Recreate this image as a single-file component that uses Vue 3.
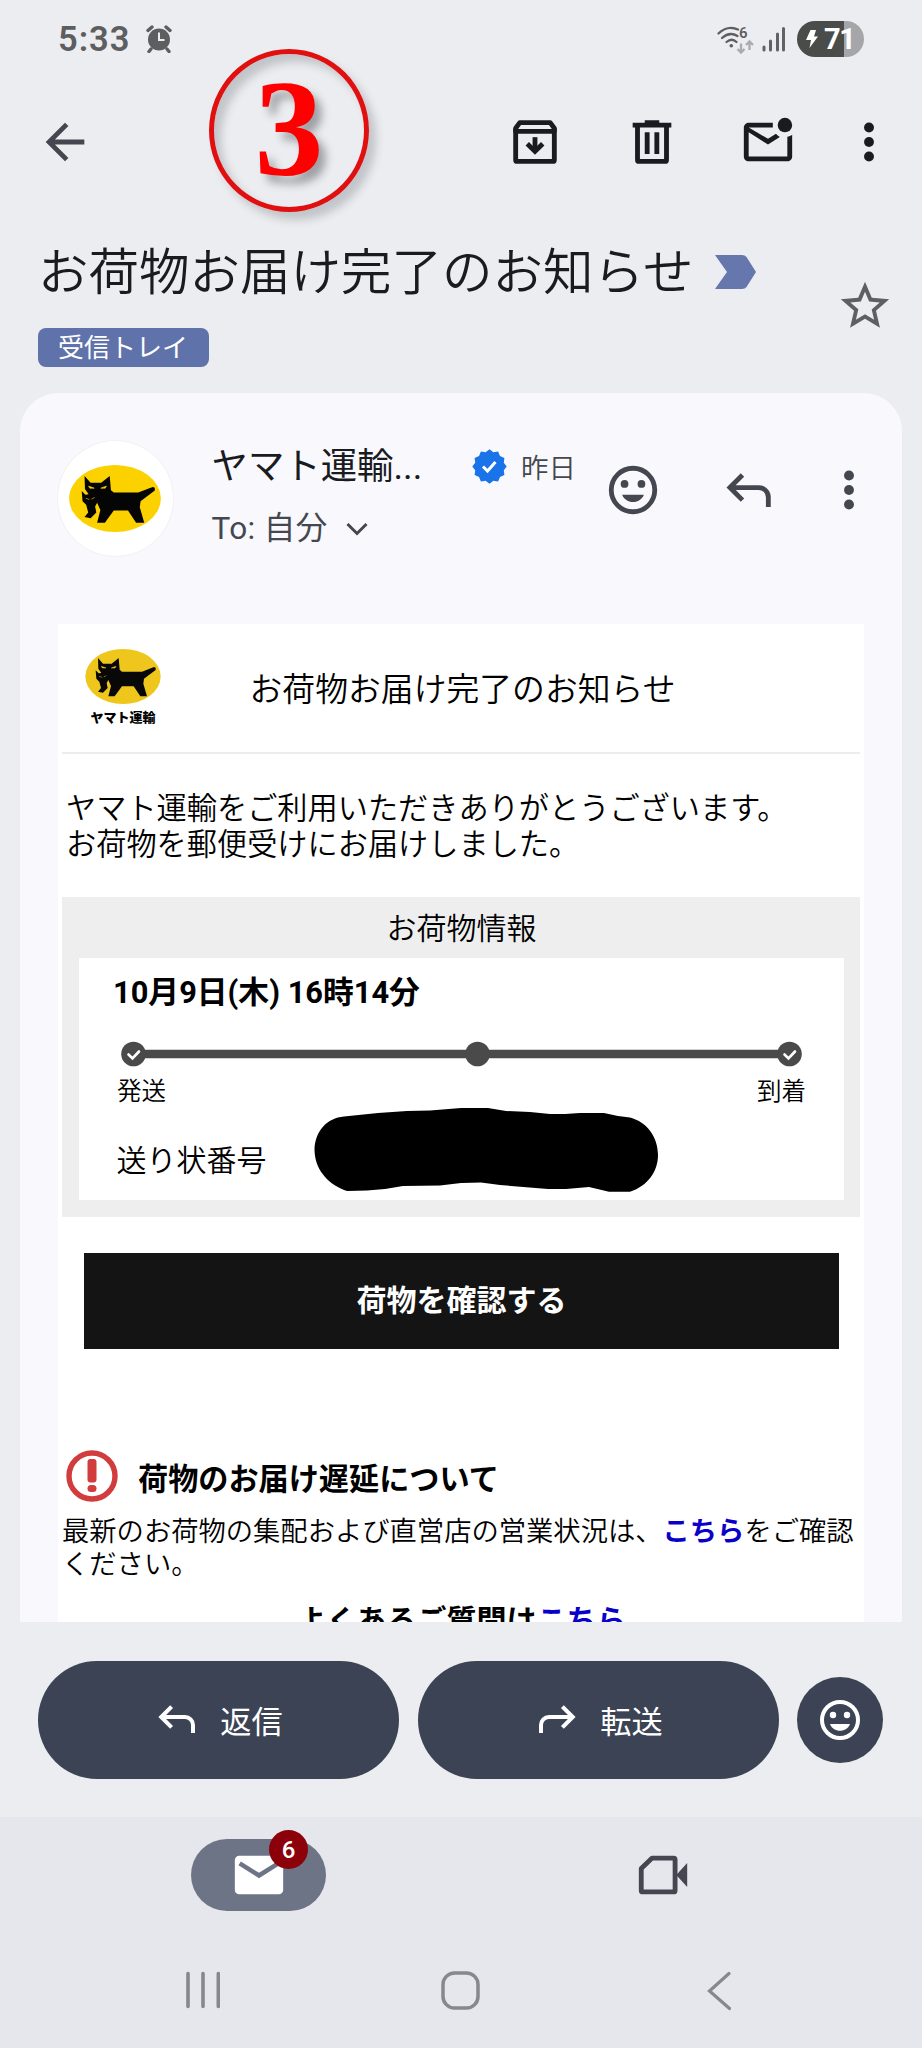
<script setup>
const catPath =
  'M294 174 L309 191 H335 L356 174 L359 209 L366 215 H426 L462 201 L467 203 V210 L432 236 L430 251 L441 289 H421 L401 259 H366 L344 289 H325 L333 258 L325 240 L320 249 L323 264 L309 278 L294 275 L303 264 L298 245 L289 236 L287 211 L296 220 L304 219 L295 206 Z'
const steps = [
  { x: 133.5, done: true },
  { x: 477.5, done: false },
  { x: 789.5, done: true },
]
const badgePoints = Array.from({ length: 24 }, (_, i) => {
  const r = i % 2 ? 14.8 : 17.2
  const a = (i * Math.PI) / 12
  return `${(17.5 + r * Math.cos(a)).toFixed(2)},${(17.5 + r * Math.sin(a)).toFixed(2)}`
}).join(' ')
</script>

<template>
  <div class="screen">
    <header class="status">
      <span class="clock">5:33</span>
      <svg class="alarm" viewBox="0 0 26 28" width="26" height="28">
        <circle cx="13" cy="14.5" r="11" fill="#5c5e60" />
        <path d="M2 5.5L6 2M24 5.5L20 2M5 24l-2 2.5M21 24l2 2.5" stroke="#5c5e60" stroke-width="3.4" stroke-linecap="round" />
        <path d="M13 7.500V15H18.500" fill="none" stroke="#ecedf1" stroke-width="2" />
      </svg>
      <div class="spacer"></div>
      <svg class="wifi" viewBox="0 0 38 30" width="38" height="30">
        <g fill="none" stroke="#5c5e60" stroke-width="2.300" stroke-linecap="round">
          <path d="M1.500 8.500C7 3 14.500 1.500 21 4.500" />
          <path d="M5 13c5-4.500 10.500-5 15.500-2" />
          <path d="M9.500 17c3.500-3 7-3 10 0" />
        </g>
        <circle cx="14.300" cy="20.800" r="1.800" fill="#5c5e60" />
        <text x="22" y="12.500" class="wifi-num">6</text>
        <path d="M24 18.500V27M20.500 24l3.500 3.500L27.500 24M32.500 25V16.500M29 20l3.500-3.500L36 20" fill="none" stroke="#a9abae" stroke-width="2.300" />
      </svg>
      <svg class="signal" viewBox="0 0 24 26" width="24" height="26">
        <path d="M2 21v3M8.500 15v9M15.500 8v16M21.500 2.500V24" stroke="#606264" stroke-width="3" stroke-linecap="round" />
      </svg>
      <div class="battery">
        <svg viewBox="0 0 12 18" width="12" height="18"><path d="M4.500 0H10L8 6.500H12L3.500 18L5 10H0Z" fill="#fff" /></svg>
        <span>71</span>
      </div>
    </header>

    <nav class="toolbar">
      <svg class="back" viewBox="0 0 24 24" width="58" height="58" fill="#44474f"><path d="M20 11H7.830l5.590-5.590L12 4l-8 8 8 8 1.410-1.410L7.830 13H20z" /></svg>
      <div class="spacer"></div>
      <svg class="t1" viewBox="0 0 24 24" width="58" height="58" fill="none" stroke="#191b20">
        <path d="M4 7V20a.6.6 0 0 0 .6.6H19.400a.6.6 0 0 0 .6-.6V7" stroke-width="2" transform="translate(0 -.6)" />
        <path d="M4 6.300L5.700 4H18.300L20 6.300V7.600H4Z" stroke-width="2" stroke-linejoin="round" />
        <path d="M12 10v5.500" stroke-width="2" />
        <path d="M8.800 12.700L12 15.900l3.200-3.200" stroke-width="2" />
      </svg>
      <svg class="t2" viewBox="0 0 24 24" width="58" height="58" fill="none" stroke="#191b20" stroke-width="2">
        <path d="M4 5H20M9 4h6" /><path d="M6 5V19.400a.6.6 0 0 0 .6.600H17.400a.6.6 0 0 0 .6-.600V5" /><path d="M10 8v9M14 8v9" />
      </svg>
      <svg class="t3" viewBox="0 0 24 24" width="58" height="58">
        <path d="M14 4H4c-1.100 0-2 .9-2 2v12c0 1.100.9 2 2 2h16c1.100 0 2-.9 2-2V9c-.6.400-1.300.700-2 .800V18H4V8l8 5 4.900-3.100c-.6-.400-1.200-.800-1.600-1.300L12 10.700 4 6H14z" fill="#191b20" />
        <circle cx="19" cy="5" r="3" fill="#191b20" />
      </svg>
      <svg class="t4" viewBox="0 0 24 24" width="58" height="58" fill="#191b20"><circle cx="12" cy="6" r="2.050" /><circle cx="12" cy="12" r="2.050" /><circle cx="12" cy="18" r="2.050" /></svg>
    </nav>

    <section class="subject">
      <div class="subject-main">
        <div class="subject-row">
          <h1>お荷物お届け完了のお知らせ</h1>
          <svg class="important" viewBox="0 0 41 34" width="41" height="34"><path d="M0 0H27q3 0 4.500 2L41 17 31.500 32q-1.500 2-4.500 2H0L12 17Z" fill="#6577ad" /></svg>
        </div>
        <span class="chip">受信トレイ</span>
      </div>
      <svg class="star" viewBox="0 0 24 24" width="58" height="58" fill="#5d5f63"><path d="M22 9.240l-7.190-.620L12 2 9.190 8.630 2 9.240l5.460 4.730L5.820 21 12 17.270 18.180 21l-1.630-7.030L22 9.240zM12 15.400l-3.760 2.270 1-4.280-3.320-2.880 4.380-.380L12 6.100l1.710 4.040 4.380.380-3.320 2.880 1 4.280L12 15.400z" /></svg>
    </section>

    <article class="card">
      <div class="sender">
        <div class="avatar">
          <svg viewBox="256 147 226 165" width="92" height="67">
            <ellipse cx="369" cy="229.500" rx="113" ry="82.500" fill="#fbd100" />
            <path :d="catPath" fill="#050505" />
            <path d="M304 199l14 5h-11zM348 199l-14 5h11zM297 229l9 3M319 227l-8 4" fill="#fbd100" stroke="#fbd100" stroke-width="1.500" />
          </svg>
        </div>
        <div class="who">
          <div class="name">ヤマト運輸...</div>
          <div class="to"><span>To: 自分</span>
            <svg viewBox="0 0 22 14" width="22" height="14"><path d="M1.500 2L11 11.500L20.500 2" fill="none" stroke="#44474f" stroke-width="3" /></svg>
          </div>
        </div>
        <svg class="verified" viewBox="0 0 35 35" width="35" height="35">
          <polygon :points="badgePoints" fill="#1a73e8" />
          <path d="M11 17.500l4.500 4.500 8-9" fill="none" stroke="#fff" stroke-width="3" />
        </svg>
        <span class="date">昨日</span>
        <svg class="a1" viewBox="0 0 24 24" width="58" height="58" fill="#44474f"><circle cx="12" cy="12" r="9" fill="none" stroke="#44474f" stroke-width="2" /><circle cx="8.500" cy="9.500" r="1.600" /><circle cx="15.500" cy="9.500" r="1.600" /><path d="M7.500 14h9c-.7 1.900-2.500 3-4.500 3s-3.800-1.100-4.500-3z" /></svg>
        <svg class="a2" viewBox="0 0 24 24" width="58" height="58" fill="none" stroke="#44474f" stroke-width="2"><path d="M4.600 11H16a4 4 0 0 1 4 4v4M9.300 5.800L4.100 11l5.200 5.200" /></svg>
        <svg class="a3" viewBox="0 0 24 24" width="58" height="58" fill="#44474f"><circle cx="12" cy="6" r="2.050" /><circle cx="12" cy="12" r="2.050" /><circle cx="12" cy="18" r="2.050" /></svg>
      </div>

      <div class="mail">
        <div class="mail-head">
          <div class="logo">
            <svg viewBox="256 147 226 165" width="76" height="55">
              <ellipse cx="369" cy="229.500" rx="113" ry="82.500" fill="#efc61c" />
              <path :d="catPath" fill="#080808" />
              <path d="M304 199l14 5h-11zM348 199l-14 5h11zM297 229l9 3M319 227l-8 4" fill="#efc61c" stroke="#efc61c" stroke-width="1.500" />
            </svg>
            <span>ヤマト運輸</span>
          </div>
          <h2>お荷物お届け完了のお知らせ</h2>
        </div>
        <p class="greeting">ヤマト運輸をご利用いただきありがとうございます。<br>お荷物を郵便受けにお届けしました。</p>

        <section class="parcel">
          <h3>お荷物情報</h3>
          <div class="parcel-body">
            <div class="when">10月9日(木) 16時14分</div>
            <svg class="track" viewBox="78 1041 766 26" width="766" height="26">
              <path d="M133 1054H790" stroke="#4a4a4a" stroke-width="8.500" />
              <g v-for="s in steps" :key="s.x">
                <circle :cx="s.x" cy="1054" r="12.300" fill="#4a4a4a" />
                <path v-if="s.done" :d="`M${s.x - 5} 1054.500l4 4 6.500-7`" fill="none" stroke="#fff" stroke-width="2.600" stroke-linecap="round" />
              </g>
            </svg>
            <div class="ends"><span>発送</span><span>到着</span></div>
            <div class="slip">
              <span>送り状番号</span>
              <svg class="redacted" viewBox="314 1107 345 86" width="345" height="86"><path d="M314.500 1150C315 1131 327 1118 344 1116.500L378 1113 407 1111 430 1110.500 461 1108H488L506 1111 530 1112 550 1114H565L580 1113H604L618 1116 630 1117.500C647 1122 658 1137 658 1155C658 1171 648 1186 630 1191.700H609L589 1187 566 1189H548L500 1185 481 1182.500 461 1183 440 1185.500 403 1186 385 1189 367 1190.500 347 1191C332 1186 315 1173 314.500 1150Z" /></svg>
            </div>
          </div>
        </section>

        <div class="confirm">荷物を確認する</div>

        <div class="notice-head">
          <svg viewBox="0 0 52 52" width="52" height="52"><circle cx="26" cy="26" r="23" fill="none" stroke="#d23c3c" stroke-width="5.400" /><rect x="21.500" y="9" width="9" height="23.500" rx="3" fill="#d23c3c" /><rect x="21.500" y="35" width="9" height="7" rx="3.500" fill="#d23c3c" /></svg>
          <h3>荷物のお届け遅延について</h3>
        </div>
        <p class="notice">最新のお荷物の集配および直営店の営業状況は、<b class="link">こちら</b>をご確認<br>ください。</p>
        <p class="faq">よくあるご質問は<b class="link">こちら</b></p>
      </div>
    </article>

    <div class="actions">
      <div class="pill">
        <svg viewBox="0 0 24 24" width="48" height="48" fill="none" stroke="#fff" stroke-width="2"><path d="M4.600 11H16a4 4 0 0 1 4 4v4M9.300 5.800L4.100 11l5.200 5.200" /></svg>
        <span>返信</span>
      </div>
      <div class="pill">
        <svg viewBox="0 0 24 24" width="48" height="48" fill="none" stroke="#fff" stroke-width="2"><path d="M19.400 11H8a4 4 0 0 0-4 4v4M14.700 5.800l5.200 5.200-5.200 5.200" /></svg>
        <span>転送</span>
      </div>
      <div class="round">
        <svg viewBox="0 0 24 24" width="48" height="48" fill="#fff"><circle cx="12" cy="12" r="9" fill="none" stroke="#fff" stroke-width="2" /><circle cx="8.500" cy="9.500" r="1.600" /><circle cx="15.500" cy="9.500" r="1.600" /><path d="M7 14h10c-.8 2.200-2.800 3.400-5 3.400S7.800 16.200 7 14z" /></svg>
      </div>
    </div>

    <footer class="bottom">
      <div class="tabs">
        <div class="mail-tab">
          <svg viewBox="0 0 24 24" width="58" height="58"><rect x="2" y="4" width="20" height="16" rx="1.800" fill="#fff" /><path d="M4 7.200l8 5 8-5" fill="none" stroke="#6d7486" stroke-width="1.900" /></svg>
          <span class="count">6</span>
        </div>
        <svg class="video" viewBox="0 0 24 24" width="58" height="58"><path d="M7.500 5H16.400a.6.6 0 0 1 .6.600V18.400a.6.600 0 0 1-.6.600H3.600a.6.600 0 0 1-.6-.6V9.300Z" fill="none" stroke="#44474f" stroke-width="2" stroke-linejoin="round" /><path d="M17.500 12L22 7V17Z" fill="#44474f" /></svg>
      </div>
      <div class="sysnav">
        <svg viewBox="0 0 34 38" width="34" height="38"><path d="M2 2.500V35.500M17 2.500V35.500M32.300 2.500V35.500" stroke="#87888c" stroke-width="3.600" stroke-linecap="round" /></svg>
        <svg class="home" viewBox="0 0 39 39" width="39" height="39"><rect x="2" y="2" width="35" height="35" rx="11.500" fill="none" stroke="#87888c" stroke-width="3.500" /></svg>
        <svg class="sysback" viewBox="0 0 24 40" width="24" height="40"><path d="M22 2.500L2.500 20 22.500 37.500" fill="none" stroke="#87888c" stroke-width="3.200" stroke-linecap="round" /></svg>
      </div>
    </footer>

    <div class="marker"><span>3</span></div>
  </div>
</template>

<style>
body { margin: 0; background: #ecedf1; }
</style>

<style scoped>
* { box-sizing: border-box; }
h1, h2, h3, p { margin: 0; font-weight: inherit; }
svg { display: block; flex: none; }
.screen {
  position: relative; width: 922px; height: 2048px; overflow: hidden;
  display: flex; flex-direction: column; background: #ecedf1; color: #191b20;
  font-family: Roboto, "Noto Sans CJK JP", sans-serif; font-weight: 350; white-space: nowrap;
}
.spacer { flex: 1; }
.status { height: 77px; padding: 0 58px 0 58px; display: flex; align-items: center; }
.clock { font-size: 34.500px; font-weight: 600; letter-spacing: 1px; color: #5c5e60; width: 88px; }
.wifi { margin-right: 7px; margin-top: 2px; }
.wifi-num { font-size: 15px; font-weight: 600; fill: #5c5e60; }
.signal { margin-right: 11px; }
.battery {
  width: 67px; height: 36px; border-radius: 18px; padding-left: 9px; display: flex; align-items: center; gap: 6px;
  background: linear-gradient(90deg, #4a4c4a 47px, #a5a6aa 47px); color: #fff; font-size: 29px; font-weight: 700; letter-spacing: -1.500px;
}
.toolbar { height: 130px; display: flex; align-items: center; padding: 0 24px 0 36px; }
.t1 { margin-right: 58.500px; }
.t2 { margin-right: 58.500px; }
.t3 { margin-right: 43px; }
.subject { height: 186px; padding: 35px 28px 0 38px; display: flex; }
.subject-main { flex: 1; }
.subject-row { display: flex; align-items: center; height: 60px; }
h1 { font-size: 50.500px; line-height: 60px; width: 677px; padding: 2px 0 0 0; }
.chip {
  display: flex; align-items: center; justify-content: center; margin-top: 26px; width: 171px; height: 39px; border-radius: 8px;
  background: #6072aa; color: #fff; font-size: 26px; font-weight: 400; line-height: 39px; padding: 2px 1px 0 0;
}
.star { margin-top: 35px; }
.card { margin: 0 20px; height: 1229px; border-radius: 38px 38px 0 0; background: #f8f8fd; overflow: hidden; }
.sender { height: 231px; display: flex; align-items: flex-start; padding-left: 37.500px; }
.avatar { margin-top: 48px; width: 115px; height: 115px; border-radius: 50%; background: #fff; display: flex; align-items: center; justify-content: center; box-shadow: 0 0 0 1px #f1f1f6; }
.who { width: 260.500px; margin-left: 39px; padding-top: 50px; }
.name { font-size: 36.400px; line-height: 48px; font-weight: 400; }
.to { display: flex; align-items: center; gap: 18px; font-size: 31.500px; line-height: 40px; margin-top: 18px; color: #44474f; }
.to span { font-weight: 400; letter-spacing: .4px; }
.verified { margin-top: 56px; }
.date { margin: 56px 0 0 14px; width: 82.500px; font-size: 27.500px; line-height: 40px; color: #44474f; }
.a1 { margin-top: 68px; }
.a2 { margin: 68px 0 0 58px; }
.a3 { margin: 68px 0 0 42.500px; }
.mail { margin: 0 38px; height: 998px; background: #fff; color: #000; padding: 0 4px; }
.mail-head { height: 130px; border-bottom: 2px solid #ededee; display: flex; }
.logo { width: 76px; margin: 25px 88.500px 0 23px; display: flex; flex-direction: column; align-items: center; }
.logo span { font-size: 13px; font-weight: 900; line-height: 18px; margin-top: 5px; }
h2 { font-size: 32.850px; line-height: 48px; margin-top: 42px; }
.greeting { font-size: 30.200px; line-height: 36.800px; margin: 36.500px 0 0 4px; }
.parcel { margin-top: 33px; height: 320px; background: #eee; padding: 0 16px 0 17px; }
.parcel h3 { font-size: 30px; line-height: 64px; text-align: center; height: 61px; }
.parcel-body { height: 242px; background: #fff; }
.when { height: 83px; padding-left: 34px; font-size: 30.800px; font-weight: 700; line-height: 69px; }
.track { margin-left: -1px; }
.ends { display: flex; justify-content: space-between; padding: 0 38px 0 38px; font-size: 24.500px; line-height: 34px; margin-top: 8px; height: 34px; }
.slip { display: flex; align-items: flex-start; padding-left: 37.500px; font-size: 30px; line-height: 40px; margin-top: -2px; }
.slip span { width: 197px; margin-top: 34px; }
.confirm { margin: 36px 21px 0 22px; height: 96px; background: #141414; color: #fff; text-align: center; font-size: 30px; font-weight: 700; line-height: 96px; }
.notice-head { display: flex; align-items: center; margin: 100.500px 0 0 4px; height: 52px; }
.notice-head h3 { font-size: 30.150px; font-weight: 700; margin: 2px 0 0 20px; }
.notice { font-size: 27.300px; line-height: 33.300px; margin-top: 14px; }
.link { color: #0a00c8; font-weight: 700; }
.faq { text-align: center; font-size: 30px; font-weight: 700; line-height: 40px; margin-top: 19px; padding-left: 1px; }
.actions { height: 195px; padding: 39px 39px 0 38px; display: flex; gap: 19px; }
.pill { width: 361px; height: 118px; border-radius: 59px; background: #3b4354; color: #fff; display: flex; align-items: center; justify-content: center; gap: 19px; font-size: 31.200px; font-weight: 400; padding: 0 1px 2px 0; }
.round { width: 86px; height: 86px; border-radius: 50%; background: #3b4354; display: flex; align-items: center; justify-content: center; margin: 16px 0 0 -1px; }
.bottom { height: 231px; background: #e6e7ec; }
.tabs { height: 115px; display: flex; padding: 22px 0 0 191px; }
.mail-tab { position: relative; width: 135px; height: 72px; border-radius: 36px; background: #6d7486; display: flex; align-items: center; justify-content: center; }
.count { position: absolute; left: 78px; top: -9px; width: 39px; height: 39px; border-radius: 50%; background: #8c0009; color: #fff; font-size: 24px; font-weight: 500; line-height: 40px; text-align: center; }
.video { margin: 7px 0 0 308px; }
.sysnav { height: 116px; display: flex; align-items: flex-start; padding: 39px 0 0 186px; }
.home { margin-left: 221px; }
.sysback { margin-left: 227px; }
.marker {
  position: absolute; left: 209px; top: 49px; width: 160px; height: 163px; border: 5px solid #e01010; border-radius: 50%;
  box-shadow: 7px 8px 9px rgba(60, 65, 70, .24), inset 7px 8px 9px rgba(60, 65, 70, .24);
  color: #f00; font-family: "Liberation Serif", serif; font-size: 138px; line-height: 150px; text-align: center;
  text-shadow: 7px 8px 9px rgba(40, 45, 50, .4); font-weight: 700;
}
</style>
